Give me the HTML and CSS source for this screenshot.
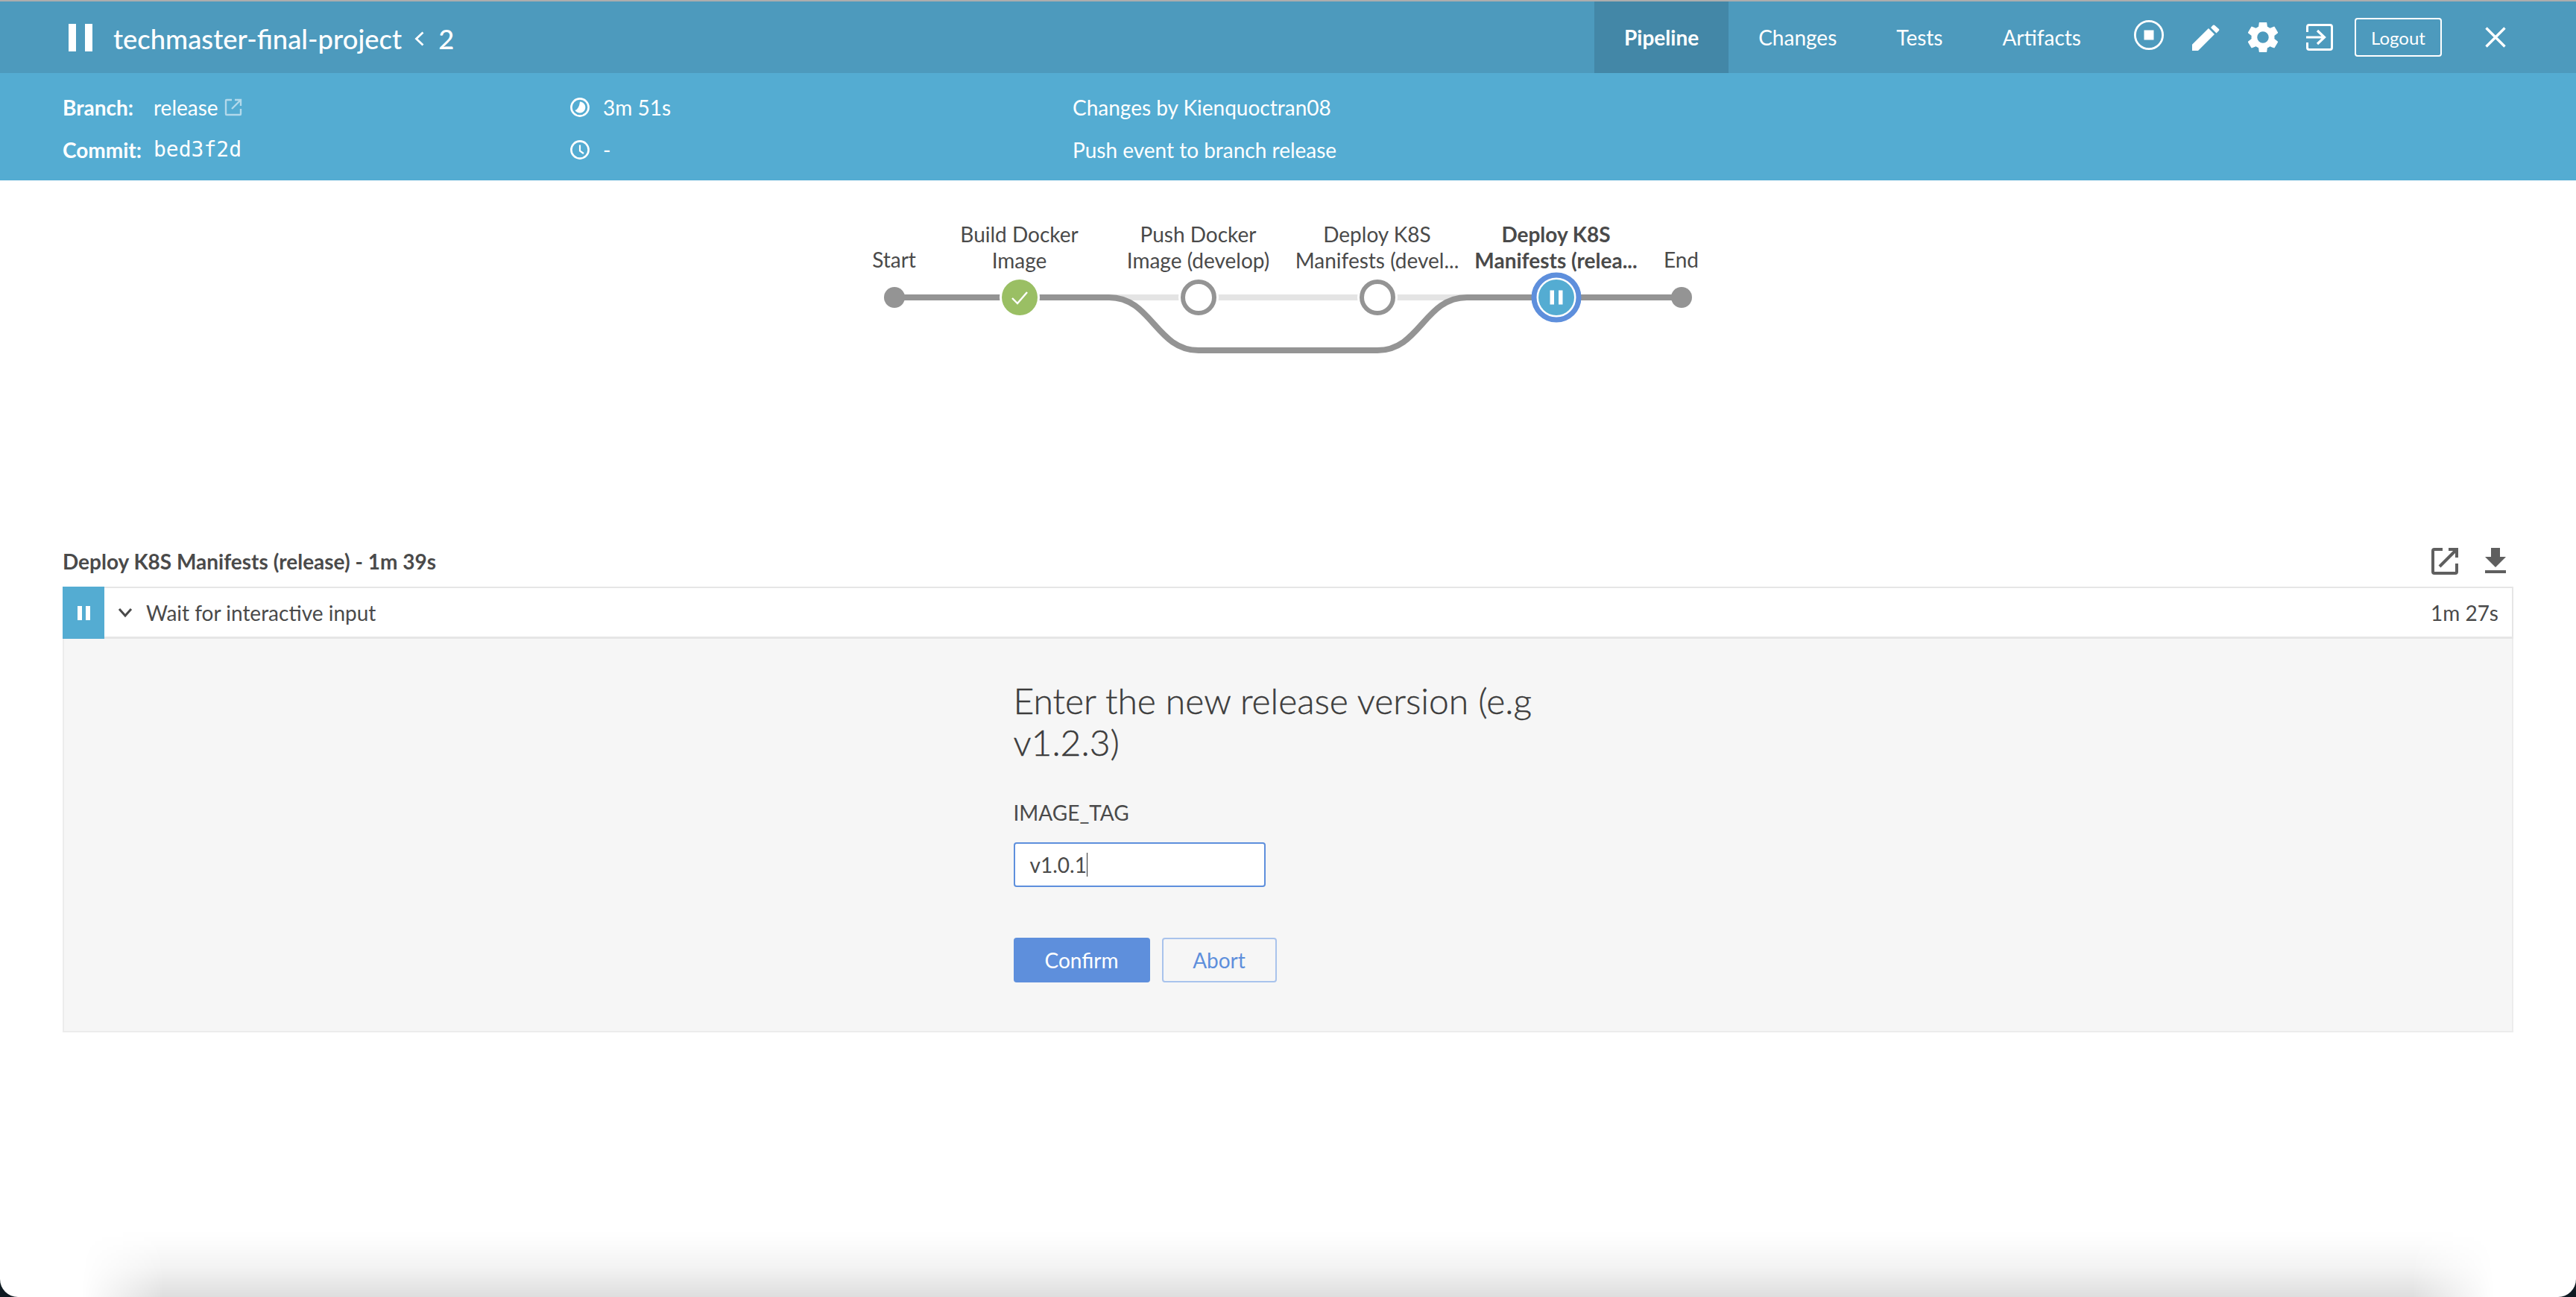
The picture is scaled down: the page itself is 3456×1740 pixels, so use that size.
FILE: index.html
```html
<!DOCTYPE html>
<html lang="en">
<head>
  <meta charset="UTF-8">
  <title>techmaster-final-project</title>
  <link rel="stylesheet" href="styles.css">
</head>
<body>
  <div class="window">

    <!-- header -->
    <header class="top-bar">
      <svg class="run-state" width="32" height="37" viewBox="0 0 32 37"><rect x="0" y="0" width="10" height="37" fill="#fff"/><rect x="22" y="0" width="10" height="37" fill="#fff"/></svg>
      <h1 class="run-name">techmaster-final-project</h1>
      <svg class="crumb" width="13" height="20" viewBox="0 0 13 20"><path d="M11.5 1.5 L2.5 10 L11.5 18.5" fill="none" stroke="#fff" stroke-width="2.8"/></svg>
      <span class="run-id">2</span>
      <nav class="tabs">
        <a class="tab tab-active">Pipeline</a>
        <a class="tab">Changes</a>
        <a class="tab">Tests</a>
        <a class="tab">Artifacts</a>
      </nav>
      <div class="actions">
        <svg class="act-stop" width="40" height="40" viewBox="0 0 40 40"><circle cx="20" cy="20" r="18.6" fill="none" stroke="#fff" stroke-width="2.8"/><rect x="13.5" y="13.5" width="13" height="13" fill="#fff"/></svg>
        <svg width="37" height="36" viewBox="0 0 37 36"><path fill="#fff" d="M0 27.7 L22 6 L30 14 L8 36 H0 Z M25 5 L28 1.8 Q29 1 30 1.8 L36 7 Q36.8 8 36 9 L32.5 12.5 Z"/></svg>
        <svg width="40" height="40" viewBox="2.7 2.7 18.6 18.6"><path fill="#fff" d="M19.14 12.94c.04-.3.06-.61.06-.94s-.02-.64-.07-.94l2.03-1.58a.49.49 0 0 0 .12-.61l-1.92-3.32a.49.49 0 0 0-.59-.22l-2.39.96a7 7 0 0 0-1.62-.94l-.36-2.54a.48.48 0 0 0-.48-.41h-3.84a.47.47 0 0 0-.47.41l-.36 2.54c-.59.24-1.13.57-1.62.94l-2.39-.96a.48.48 0 0 0-.59.22L2.74 8.87a.47.47 0 0 0 .12.61l2.03 1.58c-.05.3-.09.63-.09.94s.02.64.07.94l-2.03 1.58a.49.49 0 0 0-.12.61l1.92 3.32c.12.22.37.29.59.22l2.39-.96c.5.38 1.03.7 1.62.94l.36 2.54c.05.24.24.41.48.41h3.84c.24 0 .44-.17.47-.41l.36-2.54a7 7 0 0 0 1.62-.94l2.39.96c.22.08.47 0 .59-.22l1.92-3.32a.47.47 0 0 0-.12-.61l-2.01-1.58zM12 15.6A3.6 3.6 0 1 1 12 8.4a3.6 3.6 0 0 1 0 7.2z"/></svg>
        <svg width="36" height="36" viewBox="0 0 36 36"><path d="M1.5 11 V4 Q1.5 1.5 4 1.5 H32 Q34.5 1.5 34.5 4 V32 Q34.5 34.5 32 34.5 H4 Q1.5 34.5 1.5 32 V25" fill="none" stroke="#fff" stroke-width="3"/><path d="M0 18 H24 M15 9 L24.5 18 L15 27" fill="none" stroke="#fff" stroke-width="3.2"/></svg>
        <button class="logout">Logout</button>
      </div>
      <svg class="close" width="28" height="28" viewBox="0 0 28 28"><path d="M1.5 1.5 L26.5 26.5 M26.5 1.5 L1.5 26.5" stroke="#fff" stroke-width="3.4"/></svg>
    </header>

    <section class="info-bar">
      <div class="info-col info-refs">
        <div class="info-row"><b>Branch:</b><span class="info-val">release</span>
          <svg class="ext" width="24" height="24" viewBox="0 0 24 24"><path d="M10 2 H3 Q2 2 2 3 V21 Q2 22 3 22 H21 Q22 22 22 21 V14 M14 2 H22 V10 M22 2 L10 14" fill="none" stroke="#fff" stroke-opacity=".55" stroke-width="2.4"/></svg>
        </div>
        <div class="info-row"><b>Commit:</b><code class="info-val sha">bed3f2d</code></div>
      </div>
      <div class="info-col info-times">
        <div class="info-row"><svg width="26" height="26" viewBox="0 0 26 26"><circle cx="13" cy="13" r="11.6" fill="none" stroke="#fff" stroke-width="2.6"/><path d="M13 5.5 A7.5 7.5 0 1 1 6.5 17 Q12 15 13 5.5 Z" fill="#fff"/></svg><span>3m 51s</span></div>
        <div class="info-row"><svg width="26" height="26" viewBox="0 0 26 26"><circle cx="13" cy="13" r="11.6" fill="none" stroke="#fff" stroke-width="2.6"/><path d="M13 6.5 V14.5 L18 18" fill="none" stroke="#fff" stroke-width="2.2"/></svg><span>-</span></div>
      </div>
      <div class="info-col info-cause">
        <div class="info-row">Changes by Kienquoctran08</div>
        <div class="info-row">Push event to branch release</div>
      </div>
    </section>

    <!-- pipeline graph -->
    <section class="graph">
      <div class="graph-canvas">
        <div class="lbl lbl-one" style="left:0px">Start</div>
        <div class="lbl" style="left:168px">Build Docker<br>Image</div>
        <div class="lbl" style="left:408px">Push Docker<br>Image (develop)</div>
        <div class="lbl" style="left:648px">Deploy K8S<br>Manifests (devel...</div>
        <div class="lbl lbl-sel" style="left:888px">Deploy K8S<br>Manifests (relea...</div>
        <div class="lbl lbl-one" style="left:1056px">End</div>
        <svg class="graph-svg" width="1200" height="120" viewBox="-60 0 1200 120">
          <g fill="none" stroke-width="8">
            <path d="M168 40 H768" stroke="#e4e4e4"/>
            <path d="M0 40 H288 C345 40 351 111 408 111 H648 C705 111 711 40 768 40 H1056" stroke="#949494"/>
          </g>
          <circle cx="0" cy="40" r="14" fill="#949494"/>
          <circle cx="168" cy="40" r="27" fill="#fff"/>
          <circle cx="168" cy="40" r="24" fill="#9abf64"/>
          <path d="M158 41 L165 48 L178 33" fill="none" stroke="#fff" stroke-width="2.4"/>
          <circle cx="408" cy="40" r="27" fill="#fff"/>
          <circle cx="408" cy="40" r="21" fill="#fff" stroke="#949494" stroke-width="6"/>
          <circle cx="648" cy="40" r="27" fill="#fff"/>
          <circle cx="648" cy="40" r="21" fill="#fff" stroke="#949494" stroke-width="6"/>
          <circle cx="888" cy="40" r="30" fill="#fff" stroke="#5e8fdc" stroke-width="7"/>
          <circle cx="888" cy="40" r="24" fill="#54acd2"/>
          <rect x="879.5" y="30.5" width="5.5" height="19" fill="#fff"/>
          <rect x="891" y="30.5" width="5.5" height="19" fill="#fff"/>
          <circle cx="1056" cy="40" r="14" fill="#949494"/>
        </svg>
      </div>
    </section>

    <!-- step detail -->
    <section class="detail">
      <div class="detail-head">
        <h2 class="detail-title">Deploy K8S Manifests (release) - 1m 39s</h2>
        <div class="detail-tools">
          <svg width="36" height="36" viewBox="0 0 36 36"><path d="M15 2 H4 Q2 2 2 4 V32 Q2 34 4 34 H32 Q34 34 34 32 V21 M23 2 H34 V13" fill="none" stroke="#5f5f5f" stroke-width="4"/><path d="M33 3 L11 25" stroke="#5f5f5f" stroke-width="4"/></svg>
          <svg width="28" height="34" viewBox="0 0 28 34"><path d="M8 0 H20 V12 H28 L14 26 L0 12 H8 Z M0 30 H28 V34 H0 Z" fill="#5f5f5f"/></svg>
        </div>
      </div>
      <div class="step-row">
        <div class="step-state"><svg width="17" height="19" viewBox="0 0 17 19"><rect width="6" height="19" fill="#fff"/><rect x="11" width="6" height="19" fill="#fff"/></svg></div>
        <svg class="step-chev" width="20" height="14" viewBox="0 0 20 14"><path d="M2 2 L10 11 L18 2" fill="none" stroke="#4a4a4a" stroke-width="3"/></svg>
        <span class="step-name">Wait for interactive input</span>
        <span class="step-time">1m 27s</span>
      </div>
      <div class="step-body">
        <form class="input-form">
          <h3 class="form-title">Enter the new release version (e.g v1.2.3)</h3>
          <label class="form-label" for="imageTag">IMAGE_TAG</label>
          <div class="form-input"><span id="imageTag">v1.0.1</span><i class="caret"></i></div>
          <div class="form-btns">
            <button type="button" class="btn btn-primary">Confirm</button>
            <button type="button" class="btn btn-ghost">Abort</button>
          </div>
        </form>
      </div>
    </section>

    <div class="dock-shadow"></div>
  </div>
</body>
</html>
```

FILE: styles.css
```css
html {
  background: #0f1a22;
}

body {
  margin: 0;
  height: 1740px;
  overflow: hidden;
  font-family: Lato, "Open Sans", sans-serif;
  color: #4a4a4a;
}

.window {
  position: relative;
  height: 1740px;
  overflow: hidden;
  background: #fff;
  border-radius: 0 0 24px 24px;
}

.top-bar {
  display: flex;
  align-items: center;
  height: 96px;
  padding-left: 92px;
  border-top: 2px solid #adadad;
  background: #4d9abd;
  color: #fff;
}

.run-state {
  margin-right: 28px;
}

.run-name {
  margin: 4px 0 0;
  font-size: 36.4px;
  font-weight: 500;
}

.crumb {
  margin: 4px 19px 0 17px;
}

.run-id {
  margin-top: 4px;
  font-size: 36.4px;
  font-weight: 500;
}

.tabs {
  display: flex;
  align-self: stretch;
  margin-left: auto;
}

.tab {
  display: flex;
  align-items: center;
  padding: 0 40px;
  font-size: 28px;
}

.tab-active {
  background: #4387a7;
  font-weight: 700;
}

.actions {
  display: flex;
  align-items: center;
  gap: 38px;
  margin-left: 31px;
}

.act-stop {
  margin-bottom: 6px;
}

.logout {
  width: 117px;
  height: 52px;
  margin-left: -9px;
  border: 2px solid #fff;
  border-radius: 4px;
  background: none;
  color: #fff;
  font: 24px Lato, sans-serif;
}

.close {
  margin: 0 94px 0 58px;
}

.info-bar {
  display: flex;
  box-sizing: border-box;
  height: 144px;
  padding-top: 4px;
  background: #54acd2;
  color: #fff;
  font-size: 28px;
}

.info-col {
  display: flex;
  flex-direction: column;
  justify-content: center;
  gap: 21px;
}

.info-refs {
  width: 681px;
  padding-left: 84px;
}

.info-times {
  width: 674px;
}

.info-row {
  display: flex;
  align-items: center;
  height: 36px;
}

.info-row b {
  width: 122px;
}

.info-val {
  margin-right: 8px;
}

.sha {
  font: 28px "DejaVu Sans Mono", monospace;
}

.info-times svg {
  margin-right: 18px;
}

.graph {
  display: flex;
  justify-content: center;
  height: 478px;
}

.graph-canvas {
  position: relative;
  width: 1056px;
  height: 240px;
  margin-left: -1px;
}

.graph-svg {
  position: absolute;
  left: -60px;
  top: 117px;
}

.lbl {
  position: absolute;
  top: 55px;
  width: 240px;
  margin-left: -120px;
  text-align: center;
  font-size: 28px;
  line-height: 35px;
  white-space: nowrap;
}

.lbl-one {
  top: 89px;
}

.lbl-sel {
  font-weight: 700;
}

.detail {
  padding: 0 84px;
}

.detail-head {
  display: flex;
  align-items: center;
  justify-content: space-between;
  box-sizing: border-box;
  height: 67px;
  padding: 0 10px 2px 0;
}

.detail-title {
  margin: 0;
  font-size: 28px;
  font-weight: 700;
}

.detail-tools {
  display: flex;
  align-items: flex-start;
  gap: 36px;
}

.step-row {
  display: flex;
  align-items: center;
  box-sizing: border-box;
  height: 70px;
  border: 2px solid #e6e6e6;
  border-left: 0;
  border-bottom-width: 3px;
}

.step-state {
  display: flex;
  align-items: center;
  justify-content: center;
  align-self: stretch;
  width: 56px;
  margin: -2px 0 -3px;
  background: #54acd2;
}

.step-chev {
  margin: 0 18px 0 18px;
}

.step-name {
  font-size: 28px;
}

.step-time {
  margin-left: auto;
  padding-right: 18px;
  font-size: 28px;
}

.step-body {
  display: flex;
  justify-content: center;
  box-sizing: border-box;
  height: 528px;
  border: 2px solid #ececec;
  border-top: 0;
  background: #f6f6f6;
}

.input-form {
  width: 720px;
  margin-left: -17px;
  padding-top: 55px;
}

.form-title {
  margin: 0 0 48px;
  font-size: 48px;
  font-weight: 300;
  line-height: 56px;
  color: #3c3c3c;
  -webkit-text-stroke: 0.4px #3c3c3c;
}

.form-label {
  display: block;
  margin-bottom: 22px;
  font-size: 28px;
  line-height: 36px;
}

.form-input {
  display: flex;
  align-items: center;
  box-sizing: border-box;
  width: 338px;
  height: 60px;
  padding-left: 20px;
  border: 2px solid #5e8fdc;
  border-radius: 4px;
  background: #fff;
  font-size: 28px;
}

.caret {
  width: 1px;
  height: 32px;
  background: #333;
}

.form-btns {
  display: flex;
  gap: 16px;
  margin-top: 68px;
}

.btn {
  height: 60px;
  border-radius: 4px;
  font: 28px Lato, sans-serif;
}

.btn-primary {
  width: 183px;
  border: 0;
  background: #5e8fdc;
  color: #fff;
}

.btn-ghost {
  width: 154px;
  border: 2px solid #a9c3ec;
  background: none;
  color: #5e8fdc;
}

/* soft shadow from the dock behind the bottom edge */
.dock-shadow {
  position: absolute;
  left: 110px;
  right: 110px;
  bottom: 0;
  height: 90px;
  background: linear-gradient(rgba(0, 0, 0, 0), rgba(0, 0, 0, 0.012) 20%, rgba(0, 0, 0, 0.047) 56%, rgba(0, 0, 0, 0.094) 81%, rgba(0, 0, 0, 0.13));
  -webkit-mask-image: linear-gradient(to right, transparent, #000 110px, #000 calc(100% - 110px), transparent);
  mask-image: linear-gradient(to right, transparent, #000 110px, #000 calc(100% - 110px), transparent);
}
```
